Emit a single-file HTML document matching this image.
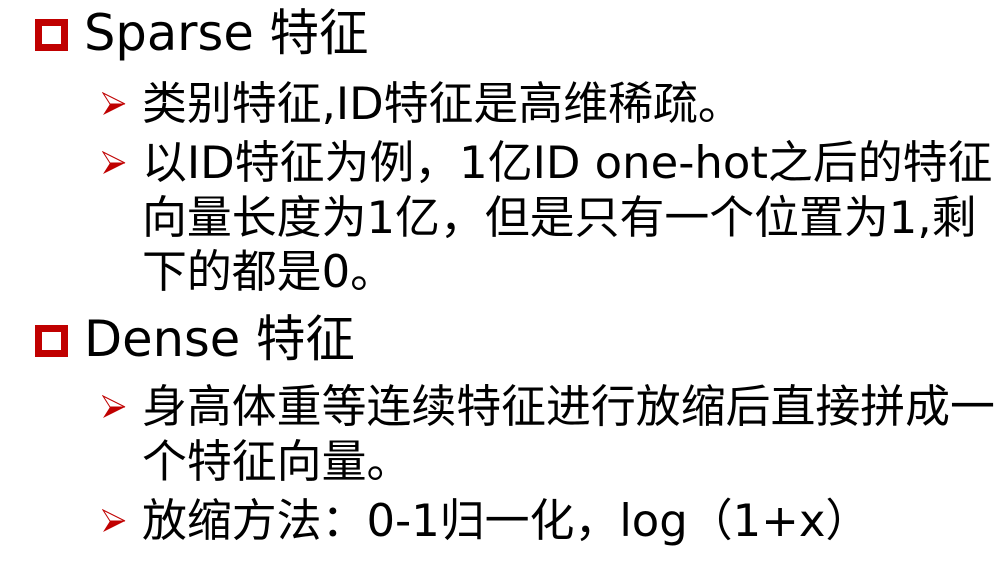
<!DOCTYPE html>
<html><head><meta charset="utf-8"><style>
body{margin:0;width:1006px;height:575px;background:#fff;position:relative;overflow:hidden;font-family:"DejaVu Sans","Noto Sans CJK SC",sans-serif;color:#000}
.l{position:absolute;white-space:nowrap;line-height:1}
.h{font-size:49.5px;left:84px}
.s{font-size:44.9px;left:142px}
.sq{position:absolute;left:35px;width:19px;height:18px;border:7px solid #c00000}
.ar{position:absolute;left:102px;width:24px;height:24px}
</style></head><body>
<div class="sq" style="top:19px"></div>
<div class="l h" style="top:9px">Sparse 特征</div>
<svg class="ar" style="top:92px" viewBox="0 0 24 24"><path d="M1 1 L23 12 L1 23 L8 12 Z" fill="#c00000"/><path d="M1 1 L23 12 L8 12 Z" fill="#fff" stroke="#c00000" stroke-width="1"/></svg>
<div class="l s" style="top:82px">类别特征,ID特征是高维稀疏。</div>
<svg class="ar" style="top:151px" viewBox="0 0 24 24"><path d="M1 1 L23 12 L1 23 L8 12 Z" fill="#c00000"/><path d="M1 1 L23 12 L8 12 Z" fill="#fff" stroke="#c00000" stroke-width="1"/></svg>
<div class="l s" style="top:141px">以ID特征为例，1亿ID one-hot之后的特征</div>
<div class="l s" style="top:196px">向量长度为1亿，但是只有一个位置为1,剩</div>
<div class="l s" style="top:250px">下的都是0。</div>
<div class="sq" style="top:325px"></div>
<div class="l h" style="top:315px">Dense 特征</div>
<svg class="ar" style="top:395px" viewBox="0 0 24 24"><path d="M1 1 L23 12 L1 23 L8 12 Z" fill="#c00000"/><path d="M1 1 L23 12 L8 12 Z" fill="#fff" stroke="#c00000" stroke-width="1"/></svg>
<div class="l s" style="top:385px">身高体重等连续特征进行放缩后直接拼成一</div>
<div class="l s" style="top:440px">个特征向量。</div>
<svg class="ar" style="top:509px" viewBox="0 0 24 24"><path d="M1 1 L23 12 L1 23 L8 12 Z" fill="#c00000"/><path d="M1 1 L23 12 L8 12 Z" fill="#fff" stroke="#c00000" stroke-width="1"/></svg>
<div class="l s" style="top:499px">放缩方法：0-1归一化，log（1+x）</div>
</body></html>
